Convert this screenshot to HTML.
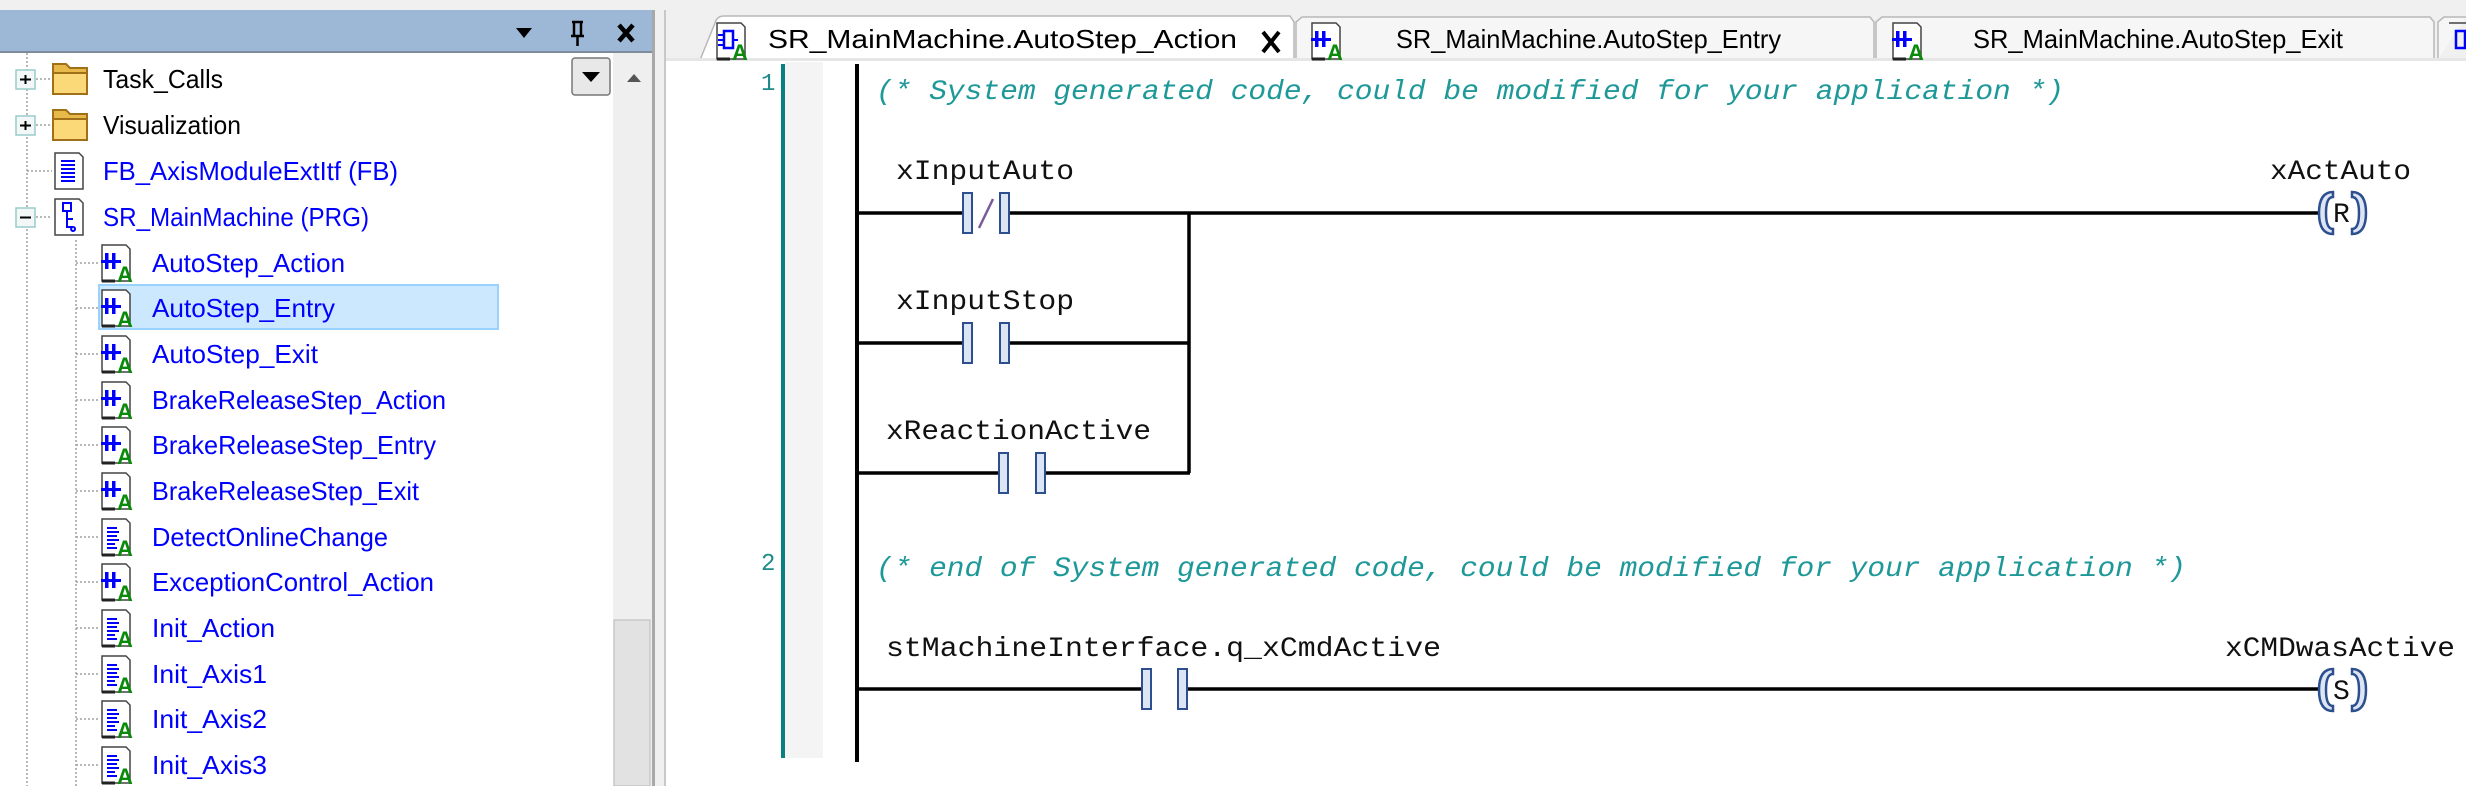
<!DOCTYPE html>
<html><head><meta charset="utf-8"><style>
html,body{margin:0;padding:0;width:2466px;height:786px;overflow:hidden;background:#fff}
svg{display:block}
.t{font-family:"Liberation Sans",sans-serif;font-size:26px}
.m{font-family:"Liberation Mono",monospace;font-size:28px;fill:#111}
.c{font-family:"Liberation Mono",monospace;font-size:28px;font-style:italic;fill:#1e9898}
</style></head><body>
<svg width="2466" height="786" viewBox="0 0 2466 786" xmlns="http://www.w3.org/2000/svg">
<defs>
 <g id="ld">
  <path d="M1 -18 H25 L29 -14 V18 H1Z" fill="#fff" stroke="#444" stroke-width="1.5"/>
  <path d="M1 18 H14" stroke="#222" stroke-width="3"/>
  <rect x="4" y="-10" width="3.5" height="16" fill="#00f"/><rect x="11" y="-10" width="3.5" height="16" fill="#00f"/>
  <rect x="0" y="-3" width="20" height="3" fill="#00f"/>
  <text x="16" y="19" font-family="Liberation Sans" font-size="22" font-weight="bold" fill="#0a8a0a">A</text>
 </g>
 <g id="st">
  <path d="M1 -18 H25 L29 -14 V18 H1Z" fill="#fff" stroke="#444" stroke-width="1.5"/>
  <path d="M1 18 H14" stroke="#222" stroke-width="3"/>
  <path d="M6 -9 H16 M6 -5 H18 M6 -1 H16 M6 3 H18 M6 7 H14 M6 11 H16" stroke="#00f" stroke-width="2"/>
  <text x="16" y="19" font-family="Liberation Sans" font-size="22" font-weight="bold" fill="#0a8a0a">A</text>
 </g>
 <g id="fold">
  <path d="M1 -15 H14 L18 -11 H35 V15 H1Z" fill="#e8b84a" stroke="#a07018" stroke-width="2"/>
  <path d="M1 -6 H35 V15 H1Z" fill="#fbd978" stroke="#a07018" stroke-width="2"/>
 </g>
 <g id="plus"><rect x="0" y="-9" width="19" height="19" fill="#f4f7f7" stroke="#9cc" stroke-width="1.5"/><path d="M4 0.5H15M9.5 -4V5" stroke="#000" stroke-width="2"/></g>
 <g id="cnt"><rect x="0" y="-20" width="9" height="40" fill="#dce5f4" stroke="#2d4f8f" stroke-width="2"/></g>
</defs>

<rect x="0" y="0" width="2466" height="10" fill="#f0f0f0"/>
<rect x="0" y="10" width="654" height="43" fill="#9db8d6"/>
<rect x="0" y="51" width="654" height="2" fill="#7f8c99"/>
<path d="M516 28 H532 L524 38Z" fill="#000"/>
<path d="M572 22 H583 M574 22 V36 H581 V22 M571 36 H584 M577.5 36 V46" stroke="#000" stroke-width="2.5" fill="none"/>
<path d="M619 25 L633 41 M633 25 L619 41" stroke="#000" stroke-width="4.5"/>
<rect x="0" y="53" width="654" height="733" fill="#fff"/>
<rect x="613" y="53" width="40" height="733" fill="#efefef"/>
<rect x="614" y="620" width="36" height="166" fill="#e2e2e2" stroke="#bbb"/>
<path d="M627 82 L634 74 L641 82Z" fill="#555"/>
<rect x="572" y="58" width="38" height="37" rx="3" fill="#e8e8e8" stroke="#777" stroke-width="1.5"/>
<path d="M582 72 H600 L591 82Z" fill="#000"/>
<rect x="652" y="10" width="3" height="776" fill="#a8a8a8"/>
<rect x="655" y="10" width="11" height="776" fill="#f0f0f0"/>
<rect x="664" y="10" width="2" height="776" fill="#c8c8c8"/>

<path d="M27 53 V786 M76 240 V786" stroke="#a0a0a0" stroke-width="1.5" stroke-dasharray="2 2"/>
<path d="M36 79H50 M36 125H50 M27 171H52 M36 217H52" stroke="#a0a0a0" stroke-width="1.5" stroke-dasharray="2 2"/>
<g stroke="#a0a0a0" stroke-width="1.5" stroke-dasharray="2 2">
<path d="M76 263H100M76 308H100M76 354H100M76 400H100M76 445H100M76 491H100M76 537H100M76 582H100M76 628H100M76 674H100M76 719H100M76 765H100"/>
</g>
<use href="#plus" x="16" y="79"/><use href="#plus" x="16" y="125"/>
<g><rect x="16" y="208" width="19" height="19" fill="#f4f7f7" stroke="#9cc" stroke-width="1.5"/><path d="M20 217.5H31" stroke="#000" stroke-width="2"/></g>
<use href="#fold" x="52" y="79"/><use href="#fold" x="52" y="125"/>
<g transform="translate(54,171)"><path d="M1 -18 H25 L29 -14 V18 H1Z" fill="#fff" stroke="#444" stroke-width="1.5"/><path d="M7 -10H21M7 -6H21M7 -2H21M7 2H21M7 6H21M7 10H21" stroke="#00f" stroke-width="2"/></g>
<g transform="translate(54,217)"><path d="M1 -18 H25 L29 -14 V18 H1Z" fill="#fff" stroke="#444" stroke-width="1.5"/><path d="M9 -14H17V-6H9Z M13 -6V10 H19 M13 2 H19 M19 10 a2 2 0 1 0 0.1 0" stroke="#00f" stroke-width="2" fill="none"/></g>
<rect x="99" y="285" width="399" height="44" fill="#cce8ff" stroke="#99d1ff" stroke-width="2"/>
<use href="#ld" x="101" y="263"/><use href="#ld" x="101" y="308"/><use href="#ld" x="101" y="354"/>
<use href="#ld" x="101" y="400"/><use href="#ld" x="101" y="445"/><use href="#ld" x="101" y="491"/>
<use href="#st" x="101" y="537"/><use href="#ld" x="101" y="582"/><use href="#st" x="101" y="628"/>
<use href="#st" x="101" y="674"/><use href="#st" x="101" y="719"/><use href="#st" x="101" y="765"/>
<g class="t">
<text x="103" y="88" textLength="120" lengthAdjust="spacingAndGlyphs" fill="#000">Task_Calls</text>
<text x="103" y="134" textLength="138" lengthAdjust="spacingAndGlyphs" fill="#000">Visualization</text>
<g fill="#0000ff">
<text x="103" y="180" textLength="295" lengthAdjust="spacingAndGlyphs">FB_AxisModuleExtItf (FB)</text>
<text x="103" y="226" textLength="266" lengthAdjust="spacingAndGlyphs">SR_MainMachine (PRG)</text>
<text x="152" y="272" textLength="193" lengthAdjust="spacingAndGlyphs">AutoStep_Action</text>
<text x="152" y="317" textLength="183" lengthAdjust="spacingAndGlyphs">AutoStep_Entry</text>
<text x="152" y="363" textLength="166" lengthAdjust="spacingAndGlyphs">AutoStep_Exit</text>
<text x="152" y="409" textLength="294" lengthAdjust="spacingAndGlyphs">BrakeReleaseStep_Action</text>
<text x="152" y="454" textLength="284" lengthAdjust="spacingAndGlyphs">BrakeReleaseStep_Entry</text>
<text x="152" y="500" textLength="267" lengthAdjust="spacingAndGlyphs">BrakeReleaseStep_Exit</text>
<text x="152" y="546" textLength="236" lengthAdjust="spacingAndGlyphs">DetectOnlineChange</text>
<text x="152" y="591" textLength="282" lengthAdjust="spacingAndGlyphs">ExceptionControl_Action</text>
<text x="152" y="637" textLength="123" lengthAdjust="spacingAndGlyphs">Init_Action</text>
<text x="152" y="683" textLength="115" lengthAdjust="spacingAndGlyphs">Init_Axis1</text>
<text x="152" y="728" textLength="115" lengthAdjust="spacingAndGlyphs">Init_Axis2</text>
<text x="152" y="774" textLength="115" lengthAdjust="spacingAndGlyphs">Init_Axis3</text>
</g></g>

<rect x="666" y="10" width="1800" height="50" fill="#f0f0f0"/>
<path d="M666 60 L700 60 L715 23 Q717 16 724 16 L1290 16 L1294 22 L1294 60" fill="#fff" stroke="#b8b8b8" stroke-width="1.5"/>
<path d="M1296 60 V22 L1302 17 H1870 L1874 22 V60" fill="#f6f6f6" stroke="#b8b8b8" stroke-width="1.5"/>
<path d="M1876 60 V22 L1882 17 H2430 L2434 22 V60" fill="#f6f6f6" stroke="#b8b8b8" stroke-width="1.5"/>
<path d="M2438 60 V22 L2444 17 H2466" fill="#f6f6f6" stroke="#b8b8b8" stroke-width="1.5"/>
<rect x="666" y="58" width="1800" height="3" fill="#e6e6e6"/>
<g transform="translate(716,41)"><path d="M1 -18 H25 L29 -14 V18 H1Z" fill="#fff" stroke="#444" stroke-width="1.5"/><path d="M1 18 H14" stroke="#222" stroke-width="3"/><rect x="8" y="-10" width="9" height="17" fill="none" stroke="#00f" stroke-width="2.5"/><path d="M2 -6H8M2 -1H8M2 4H8M17 -1H22" stroke="#00f" stroke-width="2"/><text x="16" y="19" font-family="Liberation Sans" font-size="22" font-weight="bold" fill="#0a8a0a">A</text></g>
<use href="#ld" x="1311" y="41"/><use href="#ld" x="1892" y="41"/>
<g transform="translate(2448,41)"><path d="M1 -18 H25" stroke="#444" stroke-width="1.5"/><rect x="8" y="-10" width="9" height="17" fill="none" stroke="#00f" stroke-width="2.5"/></g>
<g class="t" fill="#000">
<text x="768" y="48" textLength="469" lengthAdjust="spacingAndGlyphs">SR_MainMachine.AutoStep_Action</text>
<text x="1396" y="48" textLength="385" lengthAdjust="spacingAndGlyphs">SR_MainMachine.AutoStep_Entry</text>
<text x="1973" y="48" textLength="370" lengthAdjust="spacingAndGlyphs">SR_MainMachine.AutoStep_Exit</text>
</g>
<path d="M1263 32 L1279 52 M1279 32 L1263 52" stroke="#000" stroke-width="4"/>

<rect x="785" y="62" width="38" height="696" fill="#f4f4f4"/>
<rect x="781" y="64" width="4" height="694" fill="#0b8080"/>
<text x="761" y="90" font-family="Liberation Mono" font-size="24" fill="#1e8a8a">1</text>
<text x="761" y="570" font-family="Liberation Mono" font-size="24" fill="#1e8a8a">2</text>
<rect x="855" y="64" width="4" height="698" fill="#000"/>
<text class="c" x="876" y="99" textLength="1188" lengthAdjust="spacingAndGlyphs">(* System generated code, could be modified for your application *)</text>
<text class="c" x="876" y="576" textLength="1310" lengthAdjust="spacingAndGlyphs">(* end of System generated code, could be modified for your application *)</text>

<g stroke="#000" stroke-width="3.5" fill="none">
<path d="M857 213 H964 M1009 213 H2320"/>
<path d="M1189 213 V473"/>
<path d="M857 343 H964 M1009 343 H1189"/>
<path d="M857 473 H1001 M1044 473 H1190"/>
<path d="M857 689 H1142 M1186 689 H2320"/>
</g>
<use href="#cnt" x="963" y="213"/><use href="#cnt" x="1000" y="213"/>
<path d="M979 228 L993 199" stroke="#7a5a9a" stroke-width="2.5"/>
<use href="#cnt" x="963" y="343"/><use href="#cnt" x="1000" y="343"/>
<use href="#cnt" x="999" y="473"/><use href="#cnt" x="1036" y="473"/>
<use href="#cnt" x="1142" y="689"/><use href="#cnt" x="1178" y="689"/>

<g fill="#dce5f4" stroke="#2d4f8f" stroke-width="2.5">
<path d="M2333 192 Q2319 192 2319 213 Q2319 234 2333 234 V229 Q2326 229 2326 213 Q2326 197 2333 197Z"/>
<path d="M2352 192 Q2366 192 2366 213 Q2366 234 2352 234 V229 Q2359 229 2359 213 Q2359 197 2352 197Z"/>
<path d="M2333 669 Q2319 669 2319 690 Q2319 711 2333 711 V706 Q2326 706 2326 690 Q2326 674 2333 674Z"/>
<path d="M2352 669 Q2366 669 2366 690 Q2366 711 2352 711 V706 Q2359 706 2359 690 Q2359 674 2352 674Z"/>
</g>
<text class="m" x="2333" y="222" font-size="24">R</text>
<text class="m" x="2333" y="699" font-size="24">S</text>

<text class="m" x="896" y="179" textLength="178" lengthAdjust="spacingAndGlyphs">xInputAuto</text>
<text class="m" x="896" y="309" textLength="178" lengthAdjust="spacingAndGlyphs">xInputStop</text>
<text class="m" x="886" y="439" textLength="265" lengthAdjust="spacingAndGlyphs">xReactionActive</text>
<text class="m" x="886" y="656" textLength="555" lengthAdjust="spacingAndGlyphs">stMachineInterface.q_xCmdActive</text>
<text class="m" x="2270" y="179" textLength="141" lengthAdjust="spacingAndGlyphs">xActAuto</text>
<text class="m" x="2225" y="656" textLength="230" lengthAdjust="spacingAndGlyphs">xCMDwasActive</text>
</svg>
</body></html>
